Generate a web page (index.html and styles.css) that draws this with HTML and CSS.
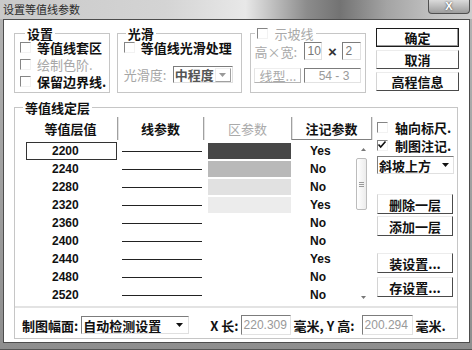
FILE: index.html
```html
<!DOCTYPE html>
<html lang="zh-CN">

<head>
    <meta charset="UTF-8">
    <meta name="viewport" content="width=device-width, initial-scale=1.0">
    <title>设置等值线参数</title>
    <link rel="stylesheet" href="styles.css">
</head>

<body>
    <div class="window">
        <div class="titlebar">
            <span class="title">设置等值线参数</span>
            <span class="close">X</span>
        </div>

        <div class="client">
            <div class="top">
                <fieldset class="group g-set">
                    <legend>设置</legend>
                    <div class="g-body">
                        <div class="check"><span class="box"></span>等值线套区</div>
                        <div class="check off"><span class="box"></span>绘制色阶.</div>
                        <div class="check"><span class="box"></span>保留边界线.</div>
                    </div>
                </fieldset>

                <fieldset class="group g-smooth">
                    <legend>光滑</legend>
                    <div class="g-body">
                        <div class="check"><span class="box"></span>等值线光滑处理</div>
                        <div class="smooth-row">
                            <span class="off-label">光滑度:</span>
                            <span class="combo combo-sm">
                                <span class="combo-text">中程度</span>
                                <span class="drop"><svg width="7" height="4" viewBox="0 0 7 4"><path d="M0 0h7L3.5 4z" fill="#999"/></svg></span>
                            </span>
                        </div>
                    </div>
                </fieldset>

                <fieldset class="group g-slope">
                    <legend><span class="box"></span>示坡线</legend>
                    <div class="g-body">
                        <div class="slope-row r1">
                            <span class="size-label">高×宽:</span>
                            <span class="edit edit-h">10</span>
                            <span class="times">×</span>
                            <span class="edit edit-w">2</span>
                        </div>
                        <div class="slope-row r2">
                            <span class="btn-off">线型...</span>
                            <span class="edit edit-wide">54 - 3</span>
                        </div>
                    </div>
                </fieldset>

                <div class="btn-col">
                    <button class="btn default">确定</button>
                    <button class="btn">取消</button>
                    <button class="btn">高程信息</button>
                </div>
            </div>

            <fieldset class="group g-layers">
                <legend>等值线定层</legend>
                <div class="layers-main">
                    <div class="list">
                        <div class="list-head">
                            <span>等值层值</span>
                            <span>线参数</span>
                            <span class="muted">区参数</span>
                            <span class="last">注记参数</span>
                        </div>
                        <div class="list-body">
                            <div class="rows">
                                <div class="row sel"><span class="val">2200</span><span class="line"></span><span class="fill" style="background:#474747"></span><span class="note">Yes</span></div>
                                <div class="row"><span class="val">2240</span><span class="line"></span><span class="fill" style="background:#b9b9b9"></span><span class="note">No</span></div>
                                <div class="row"><span class="val">2280</span><span class="line"></span><span class="fill" style="background:#e1e1e1"></span><span class="note">No</span></div>
                                <div class="row"><span class="val">2320</span><span class="line"></span><span class="fill" style="background:#ececec"></span><span class="note">Yes</span></div>
                                <div class="row"><span class="val">2360</span><span class="line"></span><span class="fill"></span><span class="note">No</span></div>
                                <div class="row"><span class="val">2400</span><span class="line"></span><span class="fill"></span><span class="note">No</span></div>
                                <div class="row"><span class="val">2440</span><span class="line"></span><span class="fill"></span><span class="note">Yes</span></div>
                                <div class="row"><span class="val">2480</span><span class="line"></span><span class="fill"></span><span class="note">No</span></div>
                                <div class="row"><span class="val">2520</span><span class="line"></span><span class="fill"></span><span class="note">No</span></div>
                            </div>
                            <div class="scroll">
                                <span class="scroll-arrow"><svg width="5" height="3" viewBox="0 0 5 3"><path d="M0 3h5L2.5 0z" fill="#777"/></svg></span>
                                <span class="thumb"><svg width="5" height="5" viewBox="0 0 5 5"><path d="M0 .5h5M0 2.5h5M0 4.5h5" stroke="#9a9a9a"/></svg></span>
                                <span class="scroll-arrow down"><svg width="5" height="3" viewBox="0 0 5 3"><path d="M0 0h5L2.5 3z" fill="#777"/></svg></span>
                            </div>
                        </div>
                    </div>

                    <div class="side">
                        <div class="check"><span class="box"></span>轴向标尺.</div>
                        <div class="check"><span class="box"><svg width="10" height="10" viewBox="0 0 10 10"><path d="M1.5 4.5l2.2 2.6L8.5 1.5" fill="none" stroke="#111" stroke-width="1.6"/></svg></span>制图注记.</div>
                        <span class="combo combo-side">
                            <span class="combo-text">斜坡上方</span>
                            <span class="drop"><svg width="7" height="4" viewBox="0 0 7 4"><path d="M0 0h7L3.5 4z" fill="#111"/></svg></span>
                        </span>
                        <button class="btn b-del">删除一层</button>
                        <button class="btn b-add">添加一层</button>
                        <button class="btn b-load">装设置...</button>
                        <button class="btn b-save">存设置...</button>
                    </div>
                </div>

                <div class="sep"></div>

                <div class="bottom">
                    <span>制图幅面:</span>
                    <span class="combo combo-auto">
                        <span class="combo-text">自动检测设置</span>
                        <span class="drop"><svg width="7" height="4" viewBox="0 0 7 4"><path d="M0 0h7L3.5 4z" fill="#111"/></svg></span>
                    </span>
                    <span class="xlabel">X 长:</span>
                    <span class="edit num">220.309</span>
                    <span class="unit unit-y">毫米, Y 高:</span>
                    <span class="edit num num-y">200.294</span>
                    <span class="unit">毫米.</span>
                </div>
            </fieldset>
        </div>
    </div>
</body>

</html>
```

FILE: styles.css
```css
* {
    box-sizing: border-box;
}

body {
    margin: 0;
    font-family: "Noto Sans CJK SC", "Liberation Sans", sans-serif;
    font-size: 13px;
    color: #111;
    background: #fff;
}

/* 窗口外框 */
.window {
    width: 472px;
    height: 350px;
    display: flex;
    flex-direction: column;
    background: linear-gradient(#b4b4b4, #8e8e8e);
    border-bottom: 1px solid #555;
}

.titlebar {
    height: 19px;
    display: flex;
    justify-content: space-between;
    align-items: flex-start;
    background: linear-gradient(to right, #c9c9c9 0%, #d4d4d4 35%, #e8e8e8 52%, #8c8c8c 65%, #737373 72%, #a4a4a4 82%, #c2c2c2 92%, #cdcdcd 100%);
}

.title {
    padding-left: 3px;
    line-height: 18px;
    font-size: 11px;
    color: #2a2a2a;
}

.close {
    width: 42px;
    height: 14px;
    margin-right: 2px;
    border: 1px solid #505050;
    border-top: none;
    border-radius: 0 0 4px 4px;
    background: linear-gradient(#dadada, #9c9c9c);
    color: #fff;
    font: bold 11px/13px "Liberation Sans", sans-serif;
    text-align: center;
    text-shadow: 0 0 2px #333;
}

.client {
    height: 324px;
    margin: 0 2px 6px 3px;
    padding: 6px 10px 0 10px;
    border: 1px solid #4d4d4d;
    background: #fff;
}

.top {
    display: flex;
    align-items: flex-start;
}

/* 分组框 */
.group {
    margin: 0;
    padding: 0;
    min-width: 0;
    border: 1px solid #c6c6c6;
}

.group > legend {
    margin-left: 8px;
    padding: 0 2px;
    line-height: 15px;
    font-weight: 700;
}

.check {
    display: flex;
    align-items: center;
    height: 17px;
    font-weight: 700;
    white-space: nowrap;
}

.check.off {
    color: #a8a8a8;
    font-weight: 400;
}

.box {
    width: 11px;
    height: 11px;
    flex: none;
    margin-right: 6px;
    border-top: 1px solid #858585;
    border-left: 1px solid #858585;
    border-right: 1px solid #f2f2f2;
    border-bottom: 1px solid #f2f2f2;
}

.box svg {
    display: block;
    margin: -1px 0 0 -1px;
}

.g-set {
    width: 96px;
    height: 67px;
}

.g-set > legend {
    margin-left: 10px;
}

.g-set .g-body {
    padding-left: 5px;
    margin-top: -2px;
}

.g-smooth {
    width: 126px;
    height: 67px;
    margin-left: 7px;
}

.g-smooth .g-body {
    padding-left: 6px;
    margin-top: -2px;
}

.smooth-row {
    display: flex;
    align-items: center;
    height: 17px;
    margin-top: 10px;
}

.off-label {
    width: 49px;
    color: #a6a6a6;
    white-space: nowrap;
}

/* 组合框 */
.combo {
    display: flex;
    align-items: center;
    background: #fff;
    font-weight: 700;
    border-top: 1px solid #7c7c7c;
    border-left: 1px solid #7c7c7c;
    border-right: 1px solid #e0e0e0;
    border-bottom: 1px solid #e0e0e0;
}

.combo-text {
    flex: 1;
    padding-left: 1px;
    white-space: nowrap;
}

.drop {
    width: 16px;
    height: 100%;
    flex: none;
    display: flex;
    align-items: center;
    justify-content: center;
}

.combo-sm {
    width: 60px;
    height: 17px;
    color: #555;
}

.combo-sm .drop {
    height: 14px;
    margin-right: 1px;
    border: 1px solid;
    border-color: #eee #a0a0a0 #a0a0a0 #eee;
}

.g-slope {
    width: 116px;
    height: 67px;
    margin-left: 8px;
}

.g-slope > legend {
    margin-left: 4px;
    display: flex;
    align-items: center;
    font-weight: 400;
    color: #a9a9a9;
}

.g-slope .g-body {
    padding-left: 3px;
}

.slope-row {
    display: flex;
    align-items: center;
}

.slope-row.r1 {
    height: 18px;
    margin-top: 1px;
}

.slope-row.r2 {
    height: 15px;
    margin-top: 8px;
}

.size-label {
    width: 50px;
    color: #a9a9a9;
    white-space: nowrap;
}

.edit {
    display: flex;
    align-items: center;
    padding-left: 2px;
    font: 12px "Liberation Sans", sans-serif;
    color: #777;
    border-top: 1px solid #7c7c7c;
    border-left: 1px solid #7c7c7c;
    border-right: 1px solid #e2e2e2;
    border-bottom: 1px solid #e2e2e2;
}

.edit-h {
    width: 18px;
    height: 18px;
}

.edit-w {
    width: 19px;
    height: 18px;
}

.times {
    width: 20px;
    text-align: center;
    font: bold 15px "Liberation Sans", sans-serif;
    color: #333;
}

.btn-off {
    width: 47px;
    height: 15px;
    display: flex;
    align-items: center;
    justify-content: center;
    color: #aaa;
    border: 1px solid;
    border-color: #eee #b4b4b4 #b4b4b4 #e4e4e4;
    line-height: 13px;
}

.edit-wide {
    width: 57px;
    height: 15px;
    margin-left: 3px;
    justify-content: center;
    color: #9a9a9a;
}

/* 按钮 */
.btn-col {
    width: 83px;
    margin-left: 10px;
    padding-top: 2px;
    display: flex;
    flex-direction: column;
    gap: 3px;
}

.btn {
    height: 19px;
    padding: 0;
    display: flex;
    align-items: center;
    justify-content: center;
    font: inherit;
    font-weight: 700;
    color: #111;
    background: #fff;
    white-space: nowrap;
    border: 1px solid;
    border-color: #ececec #4a4a4a #4a4a4a #d4d4d4;
}

.btn.default {
    border-color: #1c1c1c;
    box-shadow: inset -1px -1px #9a9a9a;
}

/* 等值线定层 */
.g-layers {
    width: 444px;
    height: 239px;
    margin-top: 7px;
}

.layers-main {
    display: flex;
    padding-left: 9px;
}

.list {
    width: 348px;
    margin-top: 2px;
}

.list-head {
    display: grid;
    grid-template-columns: 94px 86px 88px 80px;
    height: 23px;
}

.list-head span {
    display: flex;
    align-items: center;
    justify-content: center;
    font-weight: 700;
    border-right: 1px solid #a0a0a0;
    box-shadow: 1px 0 #e2e2e2;
}

.list-head .muted {
    color: #aaa;
    font-weight: 400;
}

.list-head .last {
    border-bottom: 1px solid #808080;
}

.list-body {
    display: flex;
    height: 162px;
    margin-top: 2px;
}

.rows {
    width: 332px;
}

.row {
    display: grid;
    grid-template-columns: 94px 86px 88px 64px;
    align-items: center;
    height: 18px;
}

.val {
    width: 91px;
    height: 18px;
    margin-left: 2px;
    padding-left: 25px;
    border: 1px solid transparent;
    font: bold 12px/16px "Liberation Sans", sans-serif;
}

.row.sel .val {
    border-color: #333;
}

.line {
    height: 1px;
    margin: 0 2px 0 4px;
    background: #222;
}

.fill {
    width: 83px;
    height: 16px;
    margin-left: 4px;
}

.note {
    padding-left: 18px;
    font: bold 12px "Liberation Sans", sans-serif;
}

.scroll {
    width: 16px;
    display: flex;
    flex-direction: column;
    align-items: flex-start;
}

.scroll-arrow {
    width: 14px;
    height: 14px;
    display: flex;
    align-items: center;
    justify-content: center;
}

.scroll-arrow.down {
    margin-top: auto;
}

.thumb {
    width: 11px;
    height: 52px;
    margin-top: 2px;
    display: flex;
    align-items: center;
    justify-content: center;
    border: 1px solid #bcbcbc;
    border-radius: 2px;
    background: linear-gradient(to right, #fff, #ececec);
}

.side {
    width: 78px;
    margin-left: 5px;
    margin-top: 3px;
    display: flex;
    flex-direction: column;
}

.side .check {
    height: 18px;
}

.side .box {
    margin-right: 7px;
}

.combo-side {
    width: 77px;
    height: 18px;
    margin-top: 2px;
}

.side .btn {
    width: 76px;
    height: 20px;
}

.b-del {
    margin-top: 20px;
}

.b-add {
    margin-top: 2px;
}

.b-load {
    margin-top: 17px;
}

.b-save {
    margin-top: 4px;
}

.sep {
    height: 2px;
    margin-top: 2px;
    background: #e3e3e3;
}

.bottom {
    display: flex;
    align-items: center;
    height: 20px;
    margin-top: 7px;
    padding-left: 7px;
    font-weight: 700;
    white-space: nowrap;
}

.combo-auto {
    width: 108px;
    height: 18px;
    margin-left: 3px;
}

.combo-auto .drop {
    width: 18px;
}

.xlabel {
    margin-left: 21px;
}

.num {
    width: 50px;
    height: 20px;
    margin-left: 2px;
    color: #999;
}

.num-y {
    width: 51px;
    margin-left: 1px;
}

.unit {
    margin-left: 3px;
}

.unit-y {
    width: 67px;
}
```
